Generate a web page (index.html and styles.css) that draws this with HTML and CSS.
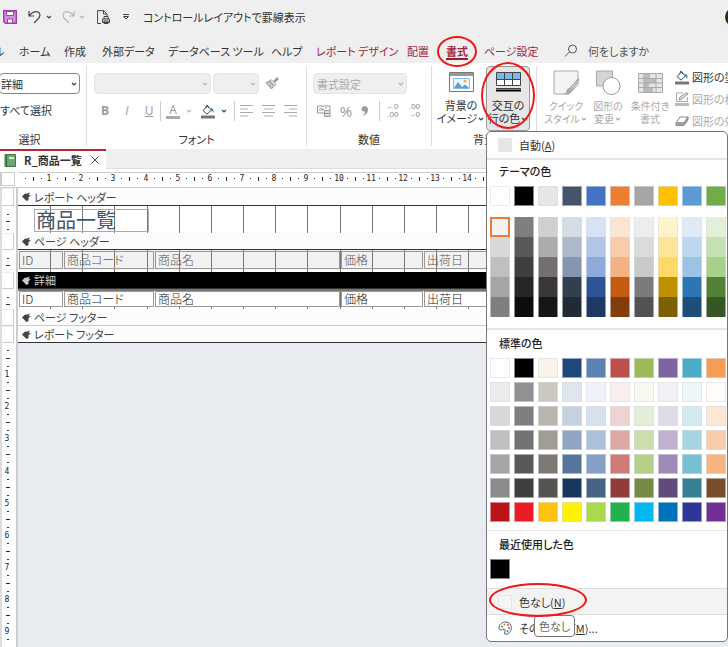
FILE: index.html
```
<!DOCTYPE html>
<html lang="ja">
<head>
  <meta charset="UTF-8">
  <title>コントロールレイアウトで罫線表示</title>
  <link rel="stylesheet" href="styles.css">
</head>
<body>
  <svg class="sprite" width="0" height="0">
    <symbol id="chevron" viewBox="0 0 8 8"><path d="M2 3l2 2 2-2" fill="none" stroke="currentColor" stroke-width="1.2"/></symbol>
    <symbol id="bucket" viewBox="0 0 14 14"><path d="M6.5 1.5L2 6l4 3.6L10.5 5.500zM4.500 3.500L6 .5l2 3" fill="none" stroke="#444"/><path d="M10 3.500q3 .5 2.500 5-1-2.500-3-2.700z" fill="#2a7ab5"/><path d="M0 11h14v3H0z" fill="#777"/></symbol>
    <symbol id="arrow" viewBox="0 0 9 9"><path d="M0 4.500L3.500 1v1L8 .5 6.500 3 9 3.500 6.500 5v3L4.500 9z" fill="currentColor"/></symbol>
  </svg>

  <header class="titlebar">
    <button class="icon-button save" aria-label="上書き保存">
      <svg width="14" height="14" viewBox="0 0 14 14"><path d="M.7.7h12.600v12.600H2.500L.7 11.500z" fill="#d590dc" stroke="#a33aa9" stroke-width="1.400"/><path d="M3.500 1.500h7v4h-7zM4.500 9h5v4h-5z" fill="#fff" stroke="#a33aa9"/></svg>
    </button>
    <button class="icon-button" aria-label="元に戻す">
      <svg width="14" height="14" viewBox="0 0 14 14"><path d="M1 1v5h5M1.300 5.700C4 2 9 .2 11.300 3c2.200 3-.5 5.500-5.300 10" fill="none" stroke="#444" stroke-width="1.200"/></svg>
    </button>
    <svg class="chevron" width="8" height="8"><use href="#chevron"/></svg>
    <button class="icon-button redo" aria-label="やり直し" disabled>
      <svg width="14" height="14" viewBox="0 0 14 14"><path d="M13 1v5H8M12.700 5.700C10 2 5 .2 2.700 3c-2.200 3 .5 5.500 5.300 10" fill="none" stroke="#b5b5b5" stroke-width="1.200"/></svg>
    </button>
    <svg class="chevron faded" width="8" height="8"><use href="#chevron"/></svg>
    <button class="icon-button preview" aria-label="印刷プレビュー">
      <svg width="13" height="14" viewBox="0 0 13 14"><path d="M4 13.500H.6V.6h6L10 4v2M6.500.6V4H10" fill="none" stroke="#444"/><path d="M5.500 9h7v3.500h-7zM7 9V6.500h4V9M7 11h4v2.500H7z" fill="#ddd" stroke="#444"/></svg>
    </button>
    <button class="icon-button more" aria-label="クイック アクセス ツール バーのユーザー設定">
      <svg width="8" height="8" viewBox="0 0 8 8"><path d="M1 1.500h6M1.500 3.500h5L4 6z" fill="none" stroke="#444"/></svg>
    </button>
    <span class="doc-title">コントロールレイアウトで罫線表示</span>
    <span class="avatar"></span>
  </header>

  <nav class="tabs">
    <a class="tab tab-file" href="#">ル</a>
    <a class="tab" href="#">ホーム</a>
    <a class="tab" href="#">作成</a>
    <a class="tab" href="#">外部データ</a>
    <a class="tab" href="#">データベース ツール</a>
    <a class="tab" href="#">ヘルプ</a>
    <a class="tab context" href="#">レポート デザイン</a>
    <a class="tab context" href="#">配置</a>
    <a class="tab context active" href="#">書式<span class="mark mark-tab"></span></a>
    <a class="tab context" href="#">ページ設定</a>
    <svg width="14" height="14" viewBox="0 0 14 14"><circle cx="8.500" cy="5" r="4" fill="none" stroke="#555"/><path d="M5.500 8L1 12.500" stroke="#555"/></svg>
    <a class="tab search" href="#">何をしますか</a>
  </nav>

  <div class="ribbon">
    <section class="group group-select">
      <div class="group-body">
        <select class="combo" aria-label="オブジェクト"><option>詳細</option></select>
        <button class="text-button">すべて選択</button>
      </div>
      <h2 class="group-label">選択</h2>
    </section>

    <section class="group group-font">
      <div class="group-body">
        <div class="row row-combos">
          <select class="combo font-name" aria-label="フォント" disabled><option></option></select>
          <select class="combo font-size" aria-label="フォント サイズ" disabled><option></option></select>
          <button class="icon-button painter" aria-label="書式のコピー" disabled>
            <svg width="14" height="13" viewBox="0 0 14 13"><path d="M13 1L9 5" stroke="#999" stroke-width="2.500"/><path d="M6 2.500l5 5-1.500 1-4.500-4.500z" fill="#fff" stroke="#999"/><path d="M4.500 4L1 5.500l5.500 6.500L9 8.500z" fill="#c5c5c5" stroke="#999"/></svg>
          </button>
        </div>
        <div class="row row-font">
          <button class="letter" disabled><b>B</b></button>
          <button class="letter" disabled><i>I</i></button>
          <button class="letter" disabled><u>U</u></button>
          <span class="divider"></span>
          <button class="letter font-color" disabled>A</button>
          <svg class="chevron faded" width="8" height="8"><use href="#chevron"/></svg>
          <button class="icon-button fill" aria-label="背景色"><svg width="14" height="15"><use href="#bucket"/></svg></button>
          <svg class="chevron" width="8" height="8"><use href="#chevron"/></svg>
          <span class="divider"></span>
          <button class="icon-button" aria-label="左揃え" disabled><svg width="13" height="12" viewBox="0 0 13 12"><path d="M0 .5h13M0 4h8M0 7.500h13M0 11h8" stroke="#aaa"/></svg></button>
          <button class="icon-button" aria-label="中央揃え" disabled><svg width="13" height="12" viewBox="0 0 13 12"><path d="M0 .5h13M2 4h9M0 7.500h13M2 11h9" stroke="#aaa"/></svg></button>
          <button class="icon-button" aria-label="右揃え" disabled><svg width="13" height="12" viewBox="0 0 13 12"><path d="M0 .5h13M5 4h8M0 7.500h13M5 11h8" stroke="#aaa"/></svg></button>
        </div>
      </div>
      <h2 class="group-label">フォント</h2>
    </section>

    <section class="group group-number">
      <div class="group-body">
        <select class="combo number-format" aria-label="書式設定" disabled><option>書式設定</option></select>
        <div class="row row-number">
          <button class="icon-button" aria-label="通貨の形式" disabled><svg width="14" height="12" viewBox="0 0 14 12"><path d="M13 5V1H.5v7H7M3 3v3M5 3v3M5 4.500h2M8 3h2" fill="none" stroke="#999"/><path d="M7.500 5.500h5.500v6H7.500zM7.500 8.500H13" fill="#ddd" stroke="#999"/></svg></button>
          <button class="letter percent" disabled>%</button>
          <button class="icon-button" aria-label="桁区切り" disabled><svg width="8" height="12" viewBox="0 0 8 12"><path d="M1 11Q4.500 9 4 6.500 0 7 .5 3.500 1.500 1 4 1q3 .5 3 4-.5 5-6 6z" fill="#999"/></svg></button>
          <span class="divider"></span>
          <button class="icon-button decimals" aria-label="小数点以下の表示桁数を増やす" disabled><span>←0</span><span>.00</span></button>
          <button class="icon-button decimals" aria-label="小数点以下の表示桁数を減らす" disabled><span>.00</span><span>→0</span></button>
        </div>
      </div>
      <h2 class="group-label">数値</h2>
    </section>

    <section class="group group-back">
      <div class="group-body big-row">
        <button class="big-button">
          <svg width="25" height="20" viewBox="0 0 25 20"><path d="M.5.500h24v19H.5z" fill="#fff" stroke="#777"/><path d="M1 1h23v3H1z" fill="#999"/><path d="M4.500 6.500h16v10h-16z" fill="#eef6fc" stroke="#8bbbe0"/><path d="M5 16l4-6 4 5 3-2.500 4 3.500z" fill="#5a9fd4"/><circle cx="16" cy="9" r="1.500" fill="#f0a858"/></svg>
          <span>背景の</span>
          <span>イメージ<svg class="chevron" width="8" height="8"><use href="#chevron"/></svg></span>
        </button>
        <div class="dropdown">
          <button class="big-button pressed" aria-expanded="true">
            <svg width="25" height="20" viewBox="0 0 25 20"><path d="M.5.500h24v13H.5z" fill="#fff" stroke="#444"/><path d="M1 1h23v6H1z" fill="#7ab8ea"/><path d="M0 7.500h25M8.500 0v14M16.500 0v14M0 16.500h25" stroke="#444"/><path d="M0 18.500h25" stroke="#000" stroke-width="2"/></svg>
            <span>交互の</span>
            <span>行の色<svg class="chevron" width="8" height="8"><use href="#chevron"/></svg></span>
            <span class="mark mark-button"></span>
          </button>

          <div class="menu">
            <button class="menu-item auto"><span class="chip"></span>自動(<u>A</u>)</button>
            <section class="menu-section theme">
              <h3>テーマの色</h3>
              <div class="swatches" id="theme"></div>
              <div class="swatches shades" id="shades"></div>
            </section>
            <section class="menu-section">
              <h3>標準の色</h3>
              <div class="swatches" id="standard"></div>
            </section>
            <section class="menu-section recent">
              <h3>最近使用した色</h3>
              <div class="swatches" id="recent"></div>
            </section>
            <button class="menu-item hover"><span class="chip empty"></span>色なし(<u>N</u>)<span class="mark mark-none"></span></button>
            <button class="menu-item">
              <svg class="palette" width="14" height="14" viewBox="0 0 14 14"><path d="M1 6C2 2 6 .5 9 1.200c3.500 1 4.500 4 4.300 6-.2 3-2.500 6-5.300 6-2 0-2-2-1-3 .7-1.500-.5-2.500-2-1.700C3 9.500.5 9 1 6z" fill="none" stroke="#555"/><circle cx="4" cy="5.500" r="1" fill="#3d9b57"/><circle cx="6.500" cy="3.500" r="1" fill="#e27b35"/><circle cx="10" cy="4" r="1" fill="#d64545"/><circle cx="11" cy="7" r="1" fill="#8058a8"/><circle cx="9.500" cy="10" r="1" fill="#3a80c9"/></svg>
              その他の色(<u>M</u>)...
              <span class="tooltip" role="tooltip">色なし</span>
            </button>
          </div>
        </div>
      </div>
      <h2 class="group-label">背景</h2>
    </section>

    <section class="group group-control">
      <div class="group-body big-row">
        <button class="big-button" disabled>
          <svg width="27" height="26" viewBox="0 0 27 26"><path d="M1 1h24v14l-9 9H1z" fill="#f4f4f4" stroke="#aaa"/><path d="M25 9l-8 9 2 2 7-10z" fill="#ccc" stroke="#999"/><path d="M17 18q-4 0-4 5l-3 1q7 2 9-4z" fill="#aaa"/></svg>
          <span>クイック</span>
          <span>スタイル<svg class="chevron" width="8" height="8"><use href="#chevron"/></svg></span>
        </button>
        <button class="big-button" disabled>
          <svg width="25" height="26" viewBox="0 0 25 26"><path d="M.5 1h16v15H.5z" fill="#d5d5d5" stroke="#aaa"/><circle cx="15.500" cy="16" r="8.500" fill="#fff" stroke="#999"/></svg>
          <span>図形の</span>
          <span>変更<svg class="chevron" width="8" height="8"><use href="#chevron"/></svg></span>
        </button>
        <button class="big-button" disabled>
          <svg width="25" height="26" viewBox="0 0 25 26"><path d="M.5 3.500h24v19H.5z" fill="#e5e5e5"/><path d="M6 4h6v5H6zM6 9h12v4H6zM6 13h5v5H6zM6 18h9v4H6z" fill="#bbb"/><path d="M.5 3.500h24v19H.5zM.5 8.500h24M.5 13h24M.5 17.500h24M6 3.500v19M18 3.500v19" fill="none" stroke="#aaa"/></svg>
          <span>条件付き</span>
          <span>書式</span>
        </button>
        <div class="shape-list">
          <button class="shape-button"><svg width="14" height="15"><use href="#bucket"/></svg>図形の塗りつぶし</button>
          <button class="shape-button" disabled><svg width="14" height="14" viewBox="0 0 14 14"><path d="M12.500 5v4.500H1.500V1H8" fill="none" stroke="#aaa"/><path d="M4 8l1-3 7-4.500 1 1.500-6 5z" fill="#ddd" stroke="#999"/><path d="M0 11h14v3H0z" fill="#bbb"/></svg>図形の枠線</button>
          <button class="shape-button" disabled><svg width="14" height="14" viewBox="0 0 14 14"><path d="M5 3h8l-4 6H1z" fill="#fff" stroke="#888"/><path d="M1 9v2.500h8L13 6V3L9 9z" fill="#aaa" stroke="#888"/></svg>図形の効果</button>
        </div>
      </div>
    </section>
  </div>

  <div class="doc-tabs">
    <div class="doc-tab">
      <svg width="12" height="13" viewBox="0 0 12 13"><path d="M1 .500h10.500v12H1z" fill="#6fa573" stroke="#3c7a42"/><path d="M2.500 1v11" stroke="#2e6334"/><path d="M5 3h5v2H5z" fill="#d8ead8"/></svg>
      <span>R_商品一覧</span>
      <button class="icon-button" aria-label="閉じる"><svg width="8" height="8" viewBox="0 0 8 8"><path d="M.5.500l7 7M7.500.500l-7 7" stroke="#444"/></svg></button>
    </div>
  </div>

  <div class="ruler-bar">
    <span class="corner"></span>
    <svg class="ruler" id="ruler"></svg>
  </div>

  <main class="designer">
    <div class="side">
      <span class="knob h18"></span>
      <svg class="ticks" width="14" height="27"><path d="M7 8.500h2M6 15.500h4M7 23.500h2" stroke="#333"/></svg>
      <span class="knob"></span>
      <svg class="ticks" width="14" height="22"><path d="M7 8.500h2M6 15.500h4" stroke="#333"/></svg>
      <span class="knob"></span>
      <svg class="ticks" width="14" height="20"><path d="M7 8.500h2M6 15.500h4" stroke="#333"/></svg>
      <span class="knob"></span>
      <span class="knob"></span>
      <svg class="side-ruler" id="side-ruler" width="14"></svg>
    </div>
    <div class="canvas">
      <h2 class="band h18"><svg width="9" height="9"><use href="#arrow"/></svg>レポート ヘッダー</h2>
      <div class="area report-header">
        <svg class="grid-lines"></svg>
        <span class="report-title">商品一覧</span>
      </div>
      <h2 class="band"><svg width="9" height="9"><use href="#arrow"/></svg>ページ ヘッダー</h2>
      <div class="area page-header">
        <svg class="grid-lines"></svg>
        <div class="fields"><span>ID</span><span>商品コード</span><span>商品名</span><span>価格</span><span>出荷日</span></div>
      </div>
      <h2 class="band current"><svg width="9" height="9"><use href="#arrow"/></svg>詳細</h2>
      <div class="area detail">
        <svg class="grid-lines"></svg>
        <div class="fields"><span>ID</span><span>商品コード</span><span>商品名</span><span>価格</span><span>出荷日</span></div>
      </div>
      <h2 class="band footer"><svg width="9" height="9"><use href="#arrow"/></svg>ページ フッター</h2>
      <h2 class="band"><svg width="9" height="9"><use href="#arrow"/></svg>レポート フッター</h2>
    </div>
  </main>

  <script src="script.js"></script>
</body>
</html>
```
FILE: styles.css
```
* {
  box-sizing: border-box;
}

body {
  margin: 0;
  height: 100vh;
  display: flex;
  flex-direction: column;
  overflow: hidden;
  background: #efefef;
  color: #333;
  font-family: "Noto Sans CJK JP", sans-serif;
  font-size: 11px;
  line-height: 14px;
  font-feature-settings: "palt";
}

button,
select {
  font: inherit;
  font-feature-settings: inherit;
  color: inherit;
  background: none;
  border: 0;
  padding: 0;
  margin: 0;
}

h2,
h3 {
  margin: 0;
  font-size: 11px;
  font-weight: normal;
}

svg {
  display: block;
  flex: none;
}

.sprite {
  position: absolute;
}

.icon-button {
  display: flex;
  align-items: center;
  justify-content: center;
}

.chevron {
  color: #444;
}

.faded {
  color: #b5b5b5;
}

.mark {
  position: absolute;
  border: 2px solid #f01818;
  border-radius: 50%;
  pointer-events: none;
  z-index: 5;
}

/* タイトルバー */
.titlebar {
  display: flex;
  align-items: center;
  height: 34px;
  flex: none;
  padding-left: 3px;
}

.save {
  margin-right: 11px;
}

.titlebar .chevron {
  margin-left: 3px;
}

.redo {
  margin-left: 8px;
}

.preview {
  margin-left: 11px;
}

.more {
  margin-left: 12px;
}

.doc-title {
  margin-left: 13px;
}

.avatar {
  width: 20px;
  height: 20px;
  margin-left: auto;
  margin-right: -17px;
  border-radius: 50%;
  background: #2b2a22;
}

/* リボンのタブ */
.tabs {
  display: grid;
  grid-template-columns: 19px 45px 38px 66px 103px 45px 91px 39px 38px 80px 24px 1fr;
  align-items: center;
  height: 29px;
  flex: none;
  padding-top: 4px;
}

.tab {
  position: relative;
  justify-self: start;
  color: #333;
  text-decoration: none;
  white-space: nowrap;
}

.tab-file {
  margin-left: -6px;
}

.context {
  color: #a4243b;
}

.active {
  font-weight: bold;
  box-shadow: 0 2px #8c2438;
}

.search {
  color: #555;
}

.mark-tab {
  left: -9px;
  top: -8px;
  width: 40px;
  height: 31px;
}

/* リボン */
.ribbon {
  display: flex;
  flex: none;
  height: 86px;
  padding: 3px 0;
  background: #fff;
}

.group {
  display: flex;
  flex-direction: column;
  flex: none;
  border-right: 1px solid #ddd;
}

.group-body {
  flex: 1;
  padding-top: 7px;
}

.group-label {
  text-align: center;
}

.group-select {
  width: 87px;
}

.group-select .group-label {
  padding-right: 27px;
}

.group-font {
  width: 220px;
  padding-left: 7px;
}

.group-font .group-label {
  padding-right: 7px;
}

.group-number {
  width: 125px;
  padding-left: 6px;
}

.group-number .group-label {
  padding-right: 6px;
}

.group-back {
  width: 105px;
}

.group-control {
  flex: 1;
  min-width: 0;
  overflow: hidden;
  border: 0;
}

.combo {
  display: block;
  height: 21px;
  padding: 0 20px 0 5px;
  appearance: none;
  border: 1px solid #888;
  border-radius: 4px;
  background: #fff url("data:image/svg+xml,%3Csvg xmlns='http://www.w3.org/2000/svg' width='8' height='8'%3E%3Cpath d='M2 3l2 2 2-2' fill='none' stroke='%23444' stroke-width='1.2'/%3E%3C/svg%3E") no-repeat right 1px center;
}

.combo:disabled {
  opacity: 1;
  color: #aaa;
  border-color: #e4e4e4;
  background-color: #efefef;
  background-image: url("data:image/svg+xml,%3Csvg xmlns='http://www.w3.org/2000/svg' width='8' height='8'%3E%3Cpath d='M2 3l2 2 2-2' fill='none' stroke='%23b5b5b5' stroke-width='1.2'/%3E%3C/svg%3E");
}

.group-select .combo {
  width: 81px;
  margin-left: -1px;
  padding-left: 1px;
}

.text-button {
  margin-top: 9px;
}

.row {
  display: flex;
  align-items: center;
}

.row-combos {
  gap: 2px;
}

.font-name {
  width: 117px;
}

.font-size {
  width: 46px;
}

.painter {
  margin-left: 4px;
}

.row-font,
.row-number {
  height: 20px;
  margin-top: 7px;
}

.letter {
  width: 22px;
  color: #999;
  font-family: "Open Sans", sans-serif;
  font-size: 12px;
}

.divider {
  width: 1px;
  height: 20px;
  background: #ccc;
}

.row-font .font-color {
  width: 14px;
  height: 15px;
  margin-left: 5px;
  border-bottom: 3px solid #aaa;
  line-height: 12px;
}

.row-font .chevron {
  margin-left: 5px;
}

.fill {
  margin-left: 8px;
}

.row-font .chevron + .divider {
  margin-left: 6px;
  margin-right: 5px;
}

.divider ~ .icon-button + .icon-button {
  margin-left: 9px;
}

.number-format {
  width: 94px;
  padding-left: 3px;
}

.row-number {
  padding-left: 4px;
}

.percent {
  width: 30px;
  font-size: 15px;
}

.row-number .divider {
  margin: 0 6px 0 10px;
}

.decimals {
  flex-direction: column;
  align-items: flex-end;
  color: #888;
  font-family: "Liberation Sans", sans-serif;
  font-size: 8px;
  line-height: 8px;
}

.big-row {
  display: flex;
  padding-top: 0;
}

.big-button {
  position: relative;
  display: flex;
  flex: none;
  flex-direction: column;
  align-items: center;
  height: 65px;
  padding-top: 6px;
  line-height: 13px;
  white-space: nowrap;
}

.big-button > svg {
  margin-bottom: 7px;
}

.big-button span {
  display: flex;
  align-items: center;
}

.big-button:disabled,
.shape-button:disabled {
  color: #aaa;
}

.big-button:disabled .chevron {
  color: #aaa;
}

.group-back .big-button {
  width: 44px;
}

.group-back > .big-row > .big-button {
  width: 54px;
  padding-left: 4px;
}

.group-back .pressed {
  border: 1px solid #999;
  border-radius: 4px;
  background: #e6e6e6;
  padding-top: 5px;
}

.big-button .mark-button {
  left: -6px;
  top: -5px;
  width: 54px;
  height: 67px;
}

.group-control .big-button {
  width: 42px;
  padding-top: 4px;
  font-size: 10px;
}

.group-control .big-button > svg {
  margin-bottom: 3px;
}

.group-control .big-row {
  padding-left: 8px;
}

.shape-list {
  padding-left: 4px;
}

.shape-button {
  display: flex;
  align-items: center;
  gap: 3px;
  height: 22px;
  white-space: nowrap;
}

/* 色のメニュー */
.dropdown {
  position: relative;
}

.menu {
  position: absolute;
  left: 0;
  top: 65px;
  width: 242px;
  z-index: 3;
  border: 1px solid #777;
  border-radius: 5px;
  background: #fff;
}

.menu-item {
  position: relative;
  display: flex;
  align-items: center;
  width: 100%;
  height: 26px;
  padding-left: 11px;
  white-space: nowrap;
}

.menu-item.hover {
  height: 27px;
  background: #f3f3f3;
  border: solid #ddd;
  border-width: 1px 0;
}

.chip {
  width: 14px;
  height: 14px;
  margin-right: 7px;
  background: #e6e6e6;
}

.chip.empty {
  background: #f5f5f5;
  border: 1px solid #e8e8e8;
}

.palette {
  margin-right: 7px;
}

.menu-section {
  padding: 6px 0 8px 3px;
  border-top: 2px solid #e6e6e6;
}

.menu-section h3 {
  padding-left: 9px;
  margin-bottom: 8px;
  font-weight: 500;
  color: #222;
}

.theme {
  padding-top: 4px;
  padding-bottom: 11px;
}

.recent {
  border-top-width: 1px;
  padding-bottom: 9px;
}

.swatches {
  display: grid;
  grid-template-columns: repeat(10, 20px);
  gap: 4px;
}

.swatch {
  height: 20px;
  border: 1px solid rgba(220, 222, 226, 0.6);
}

.shades {
  row-gap: 0;
  margin-top: 11px;
}

.shades .swatch {
  border-top: 0;
  border-bottom: 0;
}

.shades .swatch.selected {
  border: 2px solid #ec7c35;
}

.mark-none {
  left: 2px;
  top: -6px;
  width: 98px;
  height: 34px;
}

.tooltip {
  position: absolute;
  left: 47px;
  top: 0;
  padding: 2px 4px;
  border: 1px solid #777;
  border-radius: 4px;
  background: #fff;
  color: #666;
  line-height: 16px;
}

/* レポートのタブ */
.doc-tabs {
  flex: none;
  height: 20px;
  border-bottom: 1px solid #ddd;
}

.doc-tab {
  display: flex;
  align-items: center;
  width: 106px;
  height: 20px;
  padding-left: 4px;
  border-top: 2px solid #b8253b;
  background: #fff;
  font-weight: bold;
}

.doc-tab span {
  margin: 0 auto 0 8px;
}

.doc-tab .icon-button {
  margin-right: 7px;
}

.ruler-bar {
  display: flex;
  flex: none;
  gap: 3px;
  height: 19px;
  padding-top: 3px;
  background: #fff;
  border-bottom: 1px solid #ccc;
}

.corner {
  width: 15px;
  height: 14px;
  border: 1px solid #ccc;
  border-left-width: 2px;
}

.ruler {
  flex: 1;
  height: 15px;
  border-top: 1px solid #ccc;
}

.ruler text,
.side-ruler text {
  font-family: "DejaVu Sans Mono", monospace;
  font-size: 8px;
  fill: #222;
  text-anchor: middle;
}

/* デザインビュー */
.designer {
  display: flex;
  flex: 1;
  min-height: 0;
}

.side {
  display: flex;
  flex-direction: column;
  width: 18px;
  background: #fff;
  border-left: 2px solid #ddd;
  border-right: 2px solid #ccc;
}

.knob {
  flex: none;
  width: 12px;
  height: 17px;
  border: 1px solid #ccc;
  border-left: 0;
  border-top-color: #eee;
}

.ticks,
.side-ruler {
  margin-left: -2px;
}

.side-ruler {
  flex: 1;
  min-height: 0;
}

.canvas {
  flex: 1;
  min-width: 0;
  background: #e8ebf0;
}

.band {
  display: flex;
  align-items: center;
  gap: 3px;
  height: 17px;
  padding-left: 4px;
  background: #fcfcfc;
  border-bottom: 1px solid #333;
  color: #444;
}

.band.current {
  background: #000;
  color: #ccc;
}

.band.footer {
  border-color: #ccc;
}

.h18 {
  height: 18px;
}

.area {
  position: relative;
  background: #fff;
}

.report-header {
  height: 27px;
  padding: 3px 16px 0;
}

.grid-lines {
  position: absolute;
  left: 0;
  top: 0;
  width: 100%;
  height: 100%;
}

.report-title {
  position: relative;
  display: block;
  width: 115px;
  height: 23px;
  padding-left: 1px;
  border: 1px solid #aaa;
  color: #44546a;
  font-size: 20px;
  line-height: 20px;
}

.fields {
  position: relative;
  display: grid;
  grid-template-columns: 44px 90px 185px 82px 1fr;
  column-gap: 1px;
  padding-left: 1px;
}

.fields span {
  height: 18px;
  padding-left: 2px;
  border: 1px solid #999;
  color: #555;
  font-size: 12px;
  font-weight: 300;
  line-height: 16px;
}

.page-header {
  height: 22px;
  padding-top: 1px;
  background: linear-gradient(#f2f2f2 20px, #fff 20px);
}

.detail {
  height: 20px;
  border-top: 2px solid #777;
}

.detail .fields span {
  height: 16px;
  line-height: 14px;
  background: #fff;
  color: #222;
}
```
FILE: script.js
```
const theme = ['#ffffff', '#000000', '#e7e6e6', '#44546a', '#4472c4', '#ed7d31', '#a5a5a5', '#ffc000', '#5b9bd5', '#70ad47'];

const shades = [
  '#f2f2f2', '#7f7f7f', '#d0cece', '#d6dce4', '#d9e2f3', '#fbe5d5', '#ededed', '#fff2cc', '#deebf6', '#e2efd9',
  '#d8d8d8', '#595959', '#aeabab', '#adb9ca', '#b4c6e7', '#f7cbac', '#dbdbdb', '#fee599', '#bdd7ee', '#c5e0b3',
  '#bfbfbf', '#3f3f3f', '#757070', '#8496b0', '#8eaadb', '#f4b183', '#c9c9c9', '#ffd965', '#9cc3e5', '#a8d08d',
  '#a5a5a5', '#262626', '#3a3838', '#323f4f', '#2f5496', '#c55a11', '#7b7b7b', '#bf9000', '#2e75b5', '#538135',
  '#7f7f7f', '#0c0c0c', '#171616', '#222a35', '#1f3864', '#833c0b', '#525252', '#7f6000', '#1e4e79', '#375623'
];

const standard = [
  '#ffffff', '#000000', '#faf3e8', '#1f497d', '#5c83b4', '#c0504d', '#9bbb59', '#8064a2', '#4bacc6', '#f59d56',
  '#ebebeb', '#919191', '#cbc8c1', '#dfe6ee', '#eef2f8', '#f9eded', '#f7f9f0', '#f2f0f6', '#edf6f9', '#fffcf9',
  '#d8d8d8', '#7f7f7f', '#bab5ac', '#c6d2df', '#d7e1ec', '#efd3d2', '#e4edd5', '#dfdce8', '#d2eaf0', '#fce6d4',
  '#bfbfbf', '#727272', '#a19d95', '#8ea4c1', '#adc0da', '#dfa8a6', '#cdddae', '#c0b2d0', '#a5d5e2', '#f9cdab',
  '#a5a5a5', '#595959', '#7e7a73', '#57769d', '#849fc6', '#d07a78', '#b5ce88', '#9f8bb8', '#77bfd3', '#f7b480',
  '#8c8c8c', '#3f3f3f', '#55544f', '#17375e', '#456287', '#903c39', '#748c43', '#604b7a', '#388194', '#7a4d2a',
  '#ba1419', '#ed1c24', '#ffc20e', '#fff200', '#a8d94e', '#22b14c', '#00b7ef', '#0072bc', '#2f3699', '#703095'
];

function fillSwatches(id, colors) {
  const box = document.getElementById(id);
  colors.forEach(color => {
    const button = document.createElement('button');
    button.className = 'swatch';
    button.style.background = color;
    button.setAttribute('aria-label', color);
    box.appendChild(button);
  });
}

fillSwatches('theme', theme);
fillSwatches('shades', shades);
fillSwatches('standard', standard);
fillSwatches('recent', ['#000000']);
document.querySelector('#shades .swatch').classList.add('selected');

// 1cm = 32.15px
const cm = n => Math.round(n * 32.15);

let ruler = '';
let lines = '';
for (let i = 0; i < 15; i++) {
  const x = cm(i);
  if (i > 0) {
    ruler += `<text x="${x - 1}" y="8">${i}</text>`;
    lines += `M${x + 0.5} 0v40`;
  }
  ruler += `<path d="M${x + 7} 5.500h1M${x + 15.5} 4v4M${x + 23} 5.500h1" stroke="#333"/>`;
}
document.getElementById('ruler').innerHTML = ruler;
document.querySelectorAll('.grid-lines').forEach(svg => {
  svg.innerHTML = `<path d="${lines}" stroke="#777"/>`;
});

let side = '';
for (let i = 0; i < 10; i++) {
  const y = cm(i);
  if (i > 0) {
    side += `<text x="7" y="${y + 2}">${i}</text>`;
  }
  side += `<path d="M7 ${y + 7.5}h2M6 ${y + 15.5}h4M7 ${y + 23.5}h2" stroke="#333"/>`;
}
document.getElementById('side-ruler').innerHTML = side;
```
